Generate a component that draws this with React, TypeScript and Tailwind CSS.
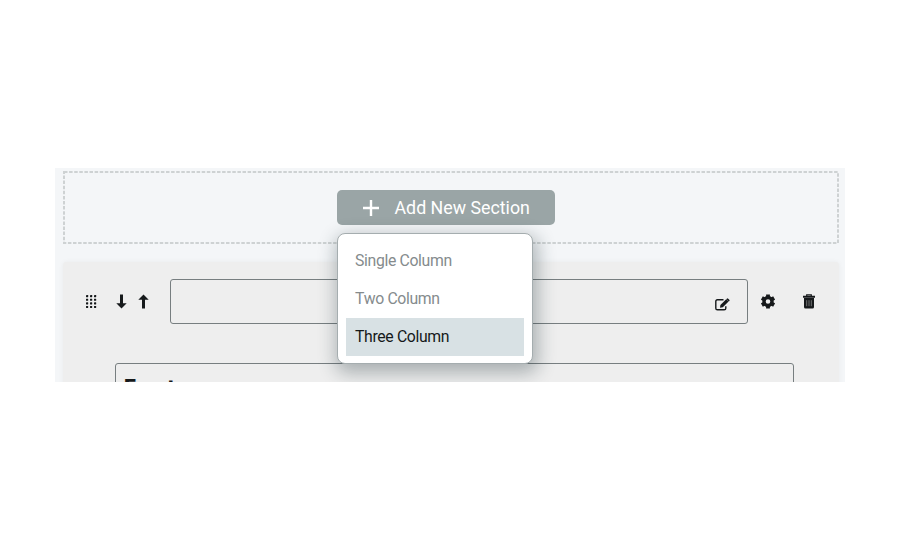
import React from 'react';

const columns = ['Single Column', 'Two Column', 'Three Column'];

function DragDots() {
  return (
    <svg width="12" height="14" viewBox="0 0 12 14" fill="#16191b" className="mr-[19px]">
      {[0, 1, 2, 3].map((r) =>
        [0, 1, 2].map((c) => (
          <rect key={`${r}-${c}`} x={1 + c * 4} y={0.1 + r * 3.6} width="2.2" height="2.1" rx="0.4" />
        )),
      )}
    </svg>
  );
}

function Arrow({ down = false }: { down?: boolean }) {
  return (
    <svg width="11" height="15" viewBox="0 0 11 15" fill="#16191b" className={down ? 'rotate-180' : ''}>
      <path d="M5.5 .4 10.7 5.8H7V14.4H4V5.8H.3Z" />
    </svg>
  );
}

function Edit() {
  return (
    <svg width="15" height="13" viewBox="0 0 15 13" fill="none">
      <path d="M8.5 1.8H2.4Q.8 1.8.8 3.4v6.8q0 1.6 1.6 1.6h6.8q1.6 0 1.6-1.6V8.2" stroke="#16191b" strokeWidth="1.4" />
      <path d="M5 9.8 5.4 6.9 11.2 1.2 13.6 3.5 7.8 9.3Z" fill="#16191b" />
      <path d="M11.8.7q.7-.7 1.4 0l1.1 1.1q.7.7 0 1.3l-.5.5L11.3 1.2Z" fill="#16191b" />
    </svg>
  );
}

function Gear() {
  return (
    <svg width="14" height="15" viewBox="0 0 14 15" fill="none" stroke="#16191b">
      <path d="M7 .5V14.5M.9 4 13.1 11M.9 11 13.1 4" strokeWidth="3.8" />
      <circle cx="7" cy="7.5" r="4" strokeWidth="3.4" fill="#eeeeee" />
    </svg>
  );
}

function Trash() {
  return (
    <svg width="12" height="15" viewBox="0 0 12 15" fill="none">
      <path d="M3.7 2V.8h4.6V2" stroke="#16191b" strokeWidth="1.2" />
      <path d="M0 1.8h12v2H0ZM1 4.1h10V13q0 1.5-1.5 1.5h-7Q1 14.5 1 13Z" fill="#16191b" />
      <path d="M3.7 6.2v6M6 6.2v6M8.3 6.2v6" stroke="#999" strokeWidth=".7" />
    </svg>
  );
}

function ColumnMenu() {
  return (
    <ul className="absolute left-0 top-[43px] z-10 h-[131px] w-[196px] rounded-[8px] border border-[#a5adaf] bg-white px-2 pt-[7.5px] shadow-[2px_6px_18px_3px_rgba(30,50,55,0.33)]">
      {columns.map((name) => (
        <li
          key={name}
          className={`flex h-[38px] items-center pl-[9px] pt-px text-[15.8px] leading-none tracking-[-0.35px] ${
            name === 'Three Column' ? 'bg-[#d8e1e4] text-[#15191a]' : 'text-[#858b8d]'
          }`}
        >
          {name}
        </li>
      ))}
    </ul>
  );
}

export default function App() {
  return (
    <div className="h-[550px] w-[900px] overflow-hidden bg-white pl-[55px] pt-[168px] font-['Roboto',sans-serif]">
      <main className="h-[214px] w-[790px] overflow-hidden bg-[#f4f6f8] pl-2 pt-[3px]">
        <section className="relative h-[73px] w-[776px] pl-[274px] pt-[19px]">
          <svg className="absolute inset-0" width="776" height="73" fill="none" stroke="#ced2d3" strokeWidth="2" strokeDasharray="3.5 1.6">
            <rect x="1" y="1" width="774" height="71" />
          </svg>
          <div className="relative z-10 w-[218px]">
            <button className="flex h-[35px] w-[218px] items-center rounded-[5px] bg-[#9aa5a6] pl-[26px] text-[17.8px] leading-none text-white">
              <svg width="16" height="16" viewBox="0 0 16 16" stroke="white" strokeWidth="2.4" className="mr-[15.5px]">
                <path d="M8 0v16M0 8h16" />
              </svg>
              <span className="whitespace-nowrap">Add New Section</span>
            </button>
            <ColumnMenu />
          </div>
        </section>
        <section className="mt-[18px] h-[140px] w-[776px] rounded-t-[3px] bg-[#eeeeee] pt-[17px] shadow-[0_0_5px_rgba(0,0,0,0.05)]">
          <div className="flex h-[45px] items-center pl-[22px]">
            <DragDots />
            <div className="flex gap-[11px]">
              <Arrow down />
              <Arrow />
            </div>
            <div className="ml-[21px] flex h-[45px] w-[578px] items-center justify-end rounded-[3px] border border-[#777e80] pr-[17px] pt-[5px]">
              <Edit />
            </div>
            <span className="ml-[13px]">
              <Gear />
            </span>
            <span className="ml-[28px]">
              <Trash />
            </span>
          </div>
          <div className="ml-[52px] mt-[39px] h-[70px] w-[679px] rounded-[3px] border border-[#777e80] pl-[8px] pt-[11px] text-[21px] font-black leading-[24px] tracking-[-0.5px] text-[#16191b]">
            Event
          </div>
        </section>
      </main>
    </div>
  );
}
